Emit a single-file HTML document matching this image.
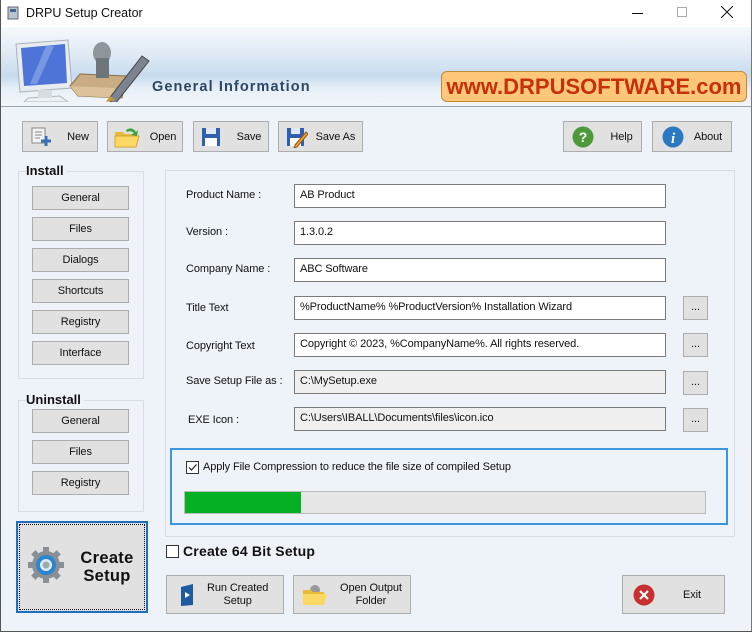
<!DOCTYPE html>
<html><head><meta charset="utf-8"><style>
*{box-sizing:border-box;margin:0;padding:0}
body{width:752px;height:632px;overflow:hidden;background:#eef3f9;font-family:"Liberation Sans",sans-serif;font-size:11px;letter-spacing:-0.1px;color:#111;position:relative}
.a{position:absolute}
.btn{position:absolute;background:#e1e1e1;border:1px solid #adadad;display:flex;align-items:center;justify-content:center;font-size:11px;color:#111}
.inp{position:absolute;left:294px;width:372px;height:24px;background:#fff;border:1px solid #7a7a7a;padding:4px 5px;font-size:11px;color:#111;white-space:nowrap}
.inp.g{background:#f0f0f0}
.lbl{position:absolute;left:186px;font-size:11px;color:#111}
.dot{position:absolute;left:683px;width:25px;height:24px;background:#e1e1e1;border:1px solid #adadad;font-size:11px;text-align:center;line-height:20px}
.grp{position:absolute;border:1px solid #d9dde3}
.gt{position:absolute;font-weight:bold;font-size:13px;background:#eef3f9;padding-right:3px;letter-spacing:0}
</style></head><body>
<div class="a" style="left:0;top:0;width:752px;height:27px;background:#fff"></div>
<svg class="a" style="left:5px;top:5px" width="16" height="16"><rect x="3" y="2" width="10" height="12" fill="#b8c4d0" stroke="#667"/><rect x="5" y="4" width="6" height="3" fill="#468"/></svg>
<div class="a" style="left:26px;top:6px;font-size:12.5px;letter-spacing:0">DRPU Setup Creator</div>
<div class="a" style="left:632px;top:13px;width:11px;height:1px;background:#111"></div>
<div class="a" style="left:677px;top:7px;width:10px;height:10px;border:1px solid #aaa"></div>
<svg class="a" style="left:721px;top:6px" width="12" height="12"><path d="M0 0L12 12M12 0L0 12" stroke="#111" stroke-width="1"/></svg>
<div class="a" style="left:0;top:0;width:1px;height:632px;background:#555"></div>
<div class="a" style="left:751px;top:0;width:1px;height:632px;background:#777"></div>
<div class="a" style="left:0;top:631px;width:752px;height:1px;background:#555"></div>
<div class="a" style="left:1px;top:27px;width:750px;height:79px;background:linear-gradient(#f6f9fc 0%,#dfeaf5 35%,#c7dbee 62%,#e7eff7 78%,#f2f6fa 100%)"></div>
<div class="a" style="left:1px;top:106px;width:750px;height:1px;background:#9aa5b0"></div>
<svg class="a" style="left:10px;top:36px" width="140" height="66">
<path d="M6 8L58 4L62 52L10 56Z" fill="#e8ecf0" stroke="#a9b1b9"/>
<path d="M11 12L55 8L57 47L14 50Z" fill="#4d74d6"/>
<path d="M20 48L36 10L44 10L27 48Z" fill="#8aa6ea" opacity=".7"/>
<path d="M18 62L50 60L58 66L14 66Z" fill="#eef1f4" stroke="#b0b8c0"/>
<rect x="28" y="54" width="14" height="8" fill="#d8dde2"/>
<path d="M60 50L70 38L116 40L112 62L68 60Z" fill="#c9ab84" stroke="#8a6f4d"/>
<path d="M60 50L104 52L112 62L68 60Z" fill="#dcc29b"/>
<ellipse cx="92" cy="17" rx="9" ry="11" fill="#8e969c"/>
<rect x="86" y="22" width="13" height="20" fill="#6d757b"/>
<path d="M98 64L132 20L139 25L105 68Z" fill="#7b8490" stroke="#444"/>
<path d="M96 66L100 60L105 64Z" fill="#c99a2e"/>
</svg>
<div class="a" style="left:152px;top:79px;font-weight:bold;font-size:14.5px;color:#2c4763;letter-spacing:1.1px">General Information</div>
<div class="a" style="left:441px;top:71px;width:306px;height:31px;background:#ffc77a;border:1px solid #c08a3a;border-radius:6px;color:#c6300b;font-weight:bold;font-size:22px;letter-spacing:0;text-align:center;line-height:30px">www.DRPUSOFTWARE.com</div>
<div class="btn" style="left:22px;top:121px;width:76px;height:31px"><svg width="22" height="20" style="margin-right:14px"><rect x="1" y="1" width="13" height="15" fill="#f4f4f4" stroke="#888"/><path d="M4 5H11M4 8H11M4 11H9" stroke="#888"/><path d="M15 9V19M10 14H20" stroke="#3a6fb8" stroke-width="3"/></svg>New</div>
<div class="btn" style="left:107px;top:121px;width:76px;height:31px"><svg width="26" height="22" style="margin-right:10px"><path d="M1 6H9L11 8H22V21H1Z" fill="#e9b93a"/><path d="M1 10H25L22 21H1Z" fill="#fcd964" stroke="#d4a531"/><path d="M12 4Q18 0 22 6L24 4L23 10L17 9L20 7Q17 4 13 6Z" fill="#3aa43a"/></svg>Open</div>
<div class="btn" style="left:193px;top:121px;width:76px;height:31px"><svg width="20" height="20" style="margin-right:16px"><rect x="1" y="1" width="18" height="18" fill="#2f5fae"/><rect x="5" y="1" width="10" height="6" fill="#dfe7f3"/><rect x="4" y="11" width="12" height="8" fill="#fff"/></svg>Save</div>
<div class="btn" style="left:278px;top:121px;width:85px;height:31px"><svg width="22" height="22" style="margin-right:8px"><rect x="1" y="2" width="17" height="18" fill="#2f5fae"/><rect x="5" y="2" width="9" height="6" fill="#dfe7f3"/><rect x="4" y="12" width="11" height="8" fill="#fff"/><path d="M9 19L20 6L22 8L11 21L8 22Z" fill="#f0a030" stroke="#8a5a10"/></svg>Save As</div>
<div class="btn" style="left:563px;top:121px;width:79px;height:31px"><svg width="22" height="22" style="margin-right:16px"><circle cx="11" cy="11" r="10.5" fill="#4e9a3a"/><text x="11" y="16" font-size="14" font-weight="bold" fill="#fff" text-anchor="middle" font-family="Liberation Sans">?</text></svg>Help</div>
<div class="btn" style="left:652px;top:121px;width:80px;height:31px"><svg width="22" height="22" style="margin-right:10px"><circle cx="11" cy="11" r="10.5" fill="#2a78c0"/><text x="11" y="17" font-size="15" font-weight="bold" font-style="italic" fill="#fff" text-anchor="middle" font-family="Liberation Serif">i</text></svg>About</div>
<div class="grp" style="left:18px;top:171px;width:126px;height:208px"></div>
<div class="gt" style="left:26px;top:163px">Install</div>
<div class="btn" style="left:32px;top:186px;width:97px;height:24px">General</div>
<div class="btn" style="left:32px;top:217px;width:97px;height:24px">Files</div>
<div class="btn" style="left:32px;top:248px;width:97px;height:24px">Dialogs</div>
<div class="btn" style="left:32px;top:279px;width:97px;height:24px">Shortcuts</div>
<div class="btn" style="left:32px;top:310px;width:97px;height:24px">Registry</div>
<div class="btn" style="left:32px;top:341px;width:97px;height:24px">Interface</div>
<div class="grp" style="left:18px;top:400px;width:126px;height:112px"></div>
<div class="gt" style="left:26px;top:392px">Uninstall</div>
<div class="btn" style="left:32px;top:409px;width:97px;height:24px">General</div>
<div class="btn" style="left:32px;top:440px;width:97px;height:24px">Files</div>
<div class="btn" style="left:32px;top:471px;width:97px;height:24px">Registry</div>
<div class="grp" style="left:165px;top:170px;width:570px;height:367px"></div>
<div class="lbl" style="top:189px">Product Name :</div><div class="inp" style="top:184px">AB Product</div>
<div class="lbl" style="top:226px">Version :</div><div class="inp" style="top:221px">1.3.0.2</div>
<div class="lbl" style="top:263px">Company Name :</div><div class="inp" style="top:258px">ABC Software</div>
<div class="lbl" style="top:302px">Title Text</div><div class="inp" style="top:296px">%ProductName% %ProductVersion% Installation Wizard</div><div class="dot" style="top:296px">...</div>
<div class="lbl" style="top:340px">Copyright Text</div><div class="inp" style="top:333px">Copyright © 2023, %CompanyName%. All rights reserved.</div><div class="dot" style="top:333px">...</div>
<div class="lbl" style="top:375px">Save Setup File as :</div><div class="inp g" style="top:370px">C:\MySetup.exe</div><div class="dot" style="top:371px">...</div>
<div class="lbl" style="left:188px;top:414px">EXE Icon :</div><div class="inp g" style="top:407px">C:\Users\IBALL\Documents\files\icon.ico</div><div class="dot" style="top:408px">...</div>
<div class="a" style="left:170px;top:448px;width:558px;height:77px;border:2px solid #3c96dd"></div>
<div class="a" style="left:186px;top:461px;width:13px;height:13px;border:1px solid #333;background:#fff"></div>
<svg class="a" style="left:187px;top:462px" width="11" height="11"><path d="M2 5.5L4.5 8L9.5 2.5" stroke="#222" fill="none" stroke-width="1.2"/></svg>
<div class="a" style="left:203px;top:461px">Apply File Compression to reduce the file size of compiled Setup</div>
<div class="a" style="left:184px;top:491px;width:522px;height:23px;background:#e6e6e6;border:1px solid #bcbcbc"></div>
<div class="a" style="left:185px;top:492px;width:116px;height:21px;background:#06b025"></div>
<div class="a" style="left:16px;top:521px;width:132px;height:92px;background:#e1e1e1;border:2px solid #1e6fc0;outline:1px dotted #111;outline-offset:-4px"></div>
<svg class="a" style="left:27px;top:546px" width="38" height="38" viewBox="0 0 38 38"><g fill="#8a8f95"><circle cx="19" cy="19" r="14"/><rect x="16" y="1" width="6" height="36"/><rect x="1" y="16" width="36" height="6"/><rect x="16" y="1" width="6" height="36" transform="rotate(45 19 19)"/><rect x="16" y="1" width="6" height="36" transform="rotate(-45 19 19)"/></g><circle cx="19" cy="19" r="10" fill="#2a86d0"/><circle cx="19" cy="19" r="6" fill="#dfe9f3"/><circle cx="19" cy="19" r="3.5" fill="#9aa"/></svg>
<div class="a" style="left:72px;top:549px;font-weight:bold;font-size:16.5px;letter-spacing:0.3px;text-align:center;line-height:18px;width:70px">Create<br>Setup</div>
<div class="a" style="left:166px;top:545px;width:13px;height:13px;border:1px solid #333;background:#fff"></div>
<div class="a" style="left:183px;top:543px;font-weight:bold;font-size:14px;letter-spacing:0.2px">Create 64 Bit Setup</div>
<div class="btn" style="left:166px;top:575px;width:118px;height:39px;justify-content:flex-start"><svg width="16" height="24" style="margin:0 12px 0 12px"><path d="M2 4L14 1V22L2 23Z" fill="#1e5aa0"/><path d="M6 9L11 12L6 15Z" fill="#fff"/></svg><div style="text-align:center;line-height:13px">Run Created<br>Setup</div></div>
<div class="btn" style="left:293px;top:575px;width:118px;height:39px;justify-content:flex-start"><svg width="26" height="24" style="margin:0 12px 0 8px"><circle cx="13" cy="7" r="5" fill="#999"/><path d="M1 7H9L11 9H22V22H1Z" fill="#e9b93a"/><path d="M1 11H25L22 22H1Z" fill="#fcd964"/></svg><div style="text-align:center;line-height:13px">Open Output<br>Folder</div></div>
<div class="btn" style="left:622px;top:575px;width:103px;height:39px;justify-content:flex-start"><svg width="22" height="22" style="margin:0 28px 0 10px"><circle cx="11" cy="11" r="10.5" fill="#c83030"/><path d="M7 7L15 15M15 7L7 15" stroke="#fff" stroke-width="2.2"/></svg>Exit</div>
</body></html>
